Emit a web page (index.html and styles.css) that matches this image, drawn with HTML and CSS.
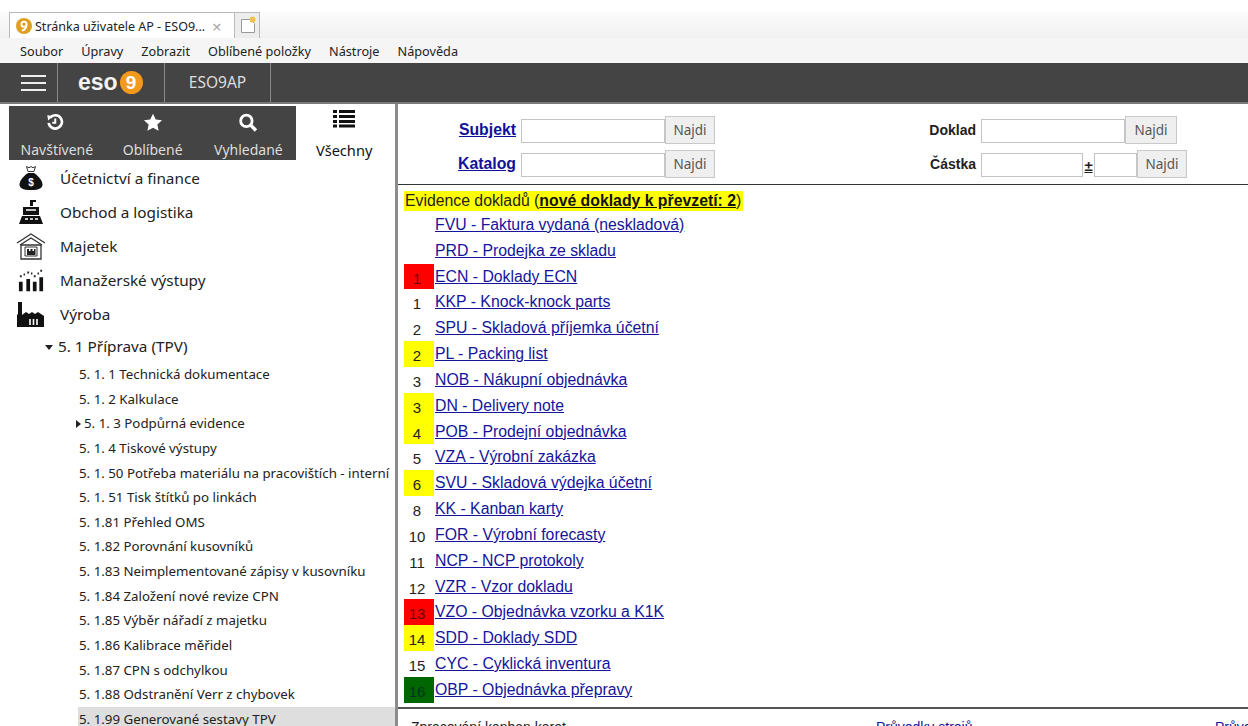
FILE: index.html
```html
<!DOCTYPE html>
<html lang="cs">
<head>
<meta charset="utf-8">
<title>Stránka uživatele AP - ESO9</title>
<link rel="stylesheet" href="styles.css">
</head>
<body>
<div class="tabstrip">
  <div class="tab">
    <svg class="favicon" viewBox="0 0 16 16"><circle cx="8" cy="8" r="8" fill="#dfa021"/><circle cx="8" cy="6.3" r="2.6" fill="none" stroke="#fff" stroke-width="1.8"/><path d="M10.5 6.5C10.5 10 9 12 6 12.5" fill="none" stroke="#fff" stroke-width="1.8"/></svg>
    <span class="tab-title">Stránka uživatele AP - ESO9...</span>
    <span class="tab-close">×</span>
  </div>
  <div class="tab-new">
    <svg viewBox="0 0 16 18" width="16" height="18"><path d="M1.5 3.5h9l4 4v9h-13z" fill="#fff" stroke="#9a9a9a"/><circle cx="12.5" cy="3.5" r="3" fill="#f2c14b"/></svg>
  </div>
</div>
<nav class="menubar">
  <span>Soubor</span><span>Úpravy</span><span>Zobrazit</span><span>Oblíbené položky</span><span>Nástroje</span><span>Nápověda</span>
</nav>
<header class="appbar">
  <div class="burger"><i></i><i></i><i></i></div>
  <div class="brand">eso<span class="brand-nine">9</span></div>
  <div class="user">ESO9AP</div>
</header>
<div class="workspace">
  <aside class="sidebar">
    <div class="side-tabs">
      <div class="side-tab">
        <svg viewBox="0 0 20 20" width="18" height="18" class="history-icon"><path d="M4.6 5.2A7.4 7.4 0 1 1 3 11" fill="none" stroke="#fff" stroke-width="3"/><path d="M1.4 2.6l6.6.6-5.6 5z" fill="#fff"/><path d="M10.3 6v4.8H7" fill="none" stroke="#fff" stroke-width="2.2"/></svg>
        <span>Navštívené</span>
      </div>
      <div class="side-tab">
        <svg viewBox="0 0 20 20" width="20" height="19"><path d="M10 .8l2.9 6.1 6.6.8-4.9 4.5 1.3 6.6L10 15.5l-5.9 3.3 1.3-6.6L.5 7.7l6.6-.8z" fill="#fff"/></svg>
        <span>Oblíbené</span>
      </div>
      <div class="side-tab">
        <svg viewBox="0 0 20 20" width="20" height="19"><circle cx="8.3" cy="8.3" r="6" fill="none" stroke="#fff" stroke-width="3"/><path d="M12.8 12.8l5.6 5.6" stroke="#fff" stroke-width="3.6" fill="none"/></svg>
        <span>Vyhledané</span>
      </div>
      <div class="side-tab side-tab-active">
        <svg viewBox="0 0 22 18" width="22" height="18"><path d="M0 1.5h4M6 1.5h16M0 6.5h4M6 6.5h16M0 11.5h4M6 11.5h16M0 16h4M6 16h16" stroke="#111" stroke-width="3.2" fill="none"/></svg>
        <span>Všechny</span>
      </div>
    </div>
    <ul class="modules">
      <li>
        <svg viewBox="0 0 26 26"><path d="M8.500 1.500l2.500 1.300 2-1.300 2 1.300 2.500-1.300-1.500 5h-6z" fill="none" stroke="#333" stroke-width="1"/><path d="M10 8h6c5 3.500 8.500 8 8.500 11.500 0 3.500-3 5.500-11.500 5.500S1.500 23 1.500 19.500C1.500 16 5 11.500 10 8z" fill="#111"/><text x="13" y="21" class="dollar">$</text></svg>
        <span>Účetnictví a finance</span>
      </li>
      <li>
        <svg viewBox="0 0 26 26"><path d="M12 1h6v2h-3v4h-3zM5 8h16v8H5z" fill="#111"/><path d="M4 17h18l3 8H1z" fill="#111"/><path d="M7 20h3M12 20h3M17 20h3M8 11h10" stroke="#fff" stroke-width="1.500"/></svg>
        <span>Obchod a logistika</span>
      </li>
      <li>
        <svg viewBox="0 0 30 28" class="wide-icon"><path d="M1 11L15 2l14 9" fill="none" stroke="#333" stroke-width="1.300"/><path d="M4 13L15 6l11 7" fill="none" stroke="#333" stroke-width="1.300"/><path d="M5 13h20v14H5z" fill="none" stroke="#333" stroke-width="1.300"/><path d="M9 15h12v9H9z" fill="none" stroke="#333" stroke-width="1"/><path d="M11 17h2v2h1.500v-2h2v2H18v-2h1.500v6H11z" fill="#222"/></svg>
        <span>Majetek</span>
      </li>
      <li>
        <svg viewBox="0 0 28 26"><path d="M1 15h4v10H1zM9 12h4v13H9zM16 15h4v10h-4zM23 10h4v15h-4z" fill="#111"/><path d="M2 9h2M10 5h2M17 9h2M24 3h2M6 7h1.500M14 6h1.500M21 6h1.500" stroke="#222" stroke-width="2.200"/></svg>
        <span>Manažerské výstupy</span>
      </li>
      <li>
        <svg viewBox="0 0 30 26" class="wide-icon"><path d="M2 1h4v13l4-3 3 2 3-2 3 2 3-2 3 2 3 2v11H1V14l1-1z" fill="#111"/><path d="M14 18v6M17.500 18v6M21 18v6" stroke="#fff" stroke-width="1.600"/></svg>
        <span>Výroba</span>
      </li>
    </ul>
    <div class="group"><span class="caret-down"></span>5. 1 Příprava (TPV)</div>
    <ul class="leaves">
      <li>5. 1. 1 Technická dokumentace</li>
      <li>5. 1. 2 Kalkulace</li>
      <li class="branch"><span class="caret-right"></span>5. 1. 3 Podpůrná evidence</li>
      <li>5. 1. 4 Tiskové výstupy</li>
      <li>5. 1. 50 Potřeba materiálu na pracovištích - interní</li>
      <li>5. 1. 51 Tisk štítků po linkách</li>
      <li>5. 1.81 Přehled OMS</li>
      <li>5. 1.82 Porovnání kusovníků</li>
      <li>5. 1.83 Neimplementované zápisy v kusovníku</li>
      <li>5. 1.84 Založení nové revize CPN</li>
      <li>5. 1.85 Výběr nářadí z majetku</li>
      <li>5. 1.86 Kalibrace měřidel</li>
      <li>5. 1.87 CPN s odchylkou</li>
      <li>5. 1.88 Odstranění Verr z chybovek</li>
      <li class="selected">5. 1.99 Generované sestavy TPV</li>
    </ul>
  </aside>
  <main class="content">
    <form class="search">
      <div class="search-col">
        <div class="search-row">
          <a class="search-label search-link" href="#">Subjekt</a>
          <input class="field" type="text">
          <button class="find" type="button">Najdi</button>
        </div>
        <div class="search-row">
          <a class="search-label search-link" href="#">Katalog</a>
          <input class="field" type="text">
          <button class="find" type="button">Najdi</button>
        </div>
      </div>
      <div class="search-col search-col-right">
        <div class="search-row">
          <span class="search-label">Doklad</span>
          <input class="field" type="text">
          <button class="find find-wide" type="button">Najdi</button>
        </div>
        <div class="search-row">
          <span class="search-label">Částka</span>
          <input class="field field-amount" type="text">
          <span class="plusminus">±</span>
          <input class="field field-tol" type="text">
          <button class="find" type="button">Najdi</button>
        </div>
      </div>
    </form>
    <section class="records">
      <div class="records-title">Evidence dokladů (<a href="#">nové doklady k převzetí: 2</a>)</div>
      <table class="records-table">
        <tr><td></td><td><a href="#">FVU - Faktura vydaná (neskladová)</a></td></tr>
        <tr><td></td><td><a href="#">PRD - Prodejka ze skladu</a></td></tr>
        <tr><td class="red">1</td><td><a href="#">ECN - Doklady ECN</a></td></tr>
        <tr><td>1</td><td><a href="#">KKP - Knock-knock parts</a></td></tr>
        <tr><td>2</td><td><a href="#">SPU - Skladová příjemka účetní</a></td></tr>
        <tr><td class="yellow">2</td><td><a href="#">PL - Packing list</a></td></tr>
        <tr><td>3</td><td><a href="#">NOB - Nákupní objednávka</a></td></tr>
        <tr><td class="yellow">3</td><td><a href="#">DN - Delivery note</a></td></tr>
        <tr><td class="yellow">4</td><td><a href="#">POB - Prodejní objednávka</a></td></tr>
        <tr><td>5</td><td><a href="#">VZA - Výrobní zakázka</a></td></tr>
        <tr><td class="yellow">6</td><td><a href="#">SVU - Skladová výdejka účetní</a></td></tr>
        <tr><td>8</td><td><a href="#">KK - Kanban karty</a></td></tr>
        <tr><td>10</td><td><a href="#">FOR - Výrobní forecasty</a></td></tr>
        <tr><td>11</td><td><a href="#">NCP - NCP protokoly</a></td></tr>
        <tr><td>12</td><td><a href="#">VZR - Vzor dokladu</a></td></tr>
        <tr><td class="red">13</td><td><a href="#">VZO - Objednávka vzorku a K1K</a></td></tr>
        <tr><td class="yellow">14</td><td><a href="#">SDD - Doklady SDD</a></td></tr>
        <tr><td>15</td><td><a href="#">CYC - Cyklická inventura</a></td></tr>
        <tr><td class="green">16</td><td><a href="#">OBP - Objednávka přepravy</a></td></tr>
      </table>
    </section>
    <section class="reports">
      <span class="report-a">Zpracování kanban karet</span>
      <a class="report-b" href="#">Průvodky strojů</a>
      <a class="report-c" href="#">Průvodky</a>
    </section>
  </main>
</div>
</body>
</html>
```
FILE: styles.css
```css
* { box-sizing: border-box; }

html, body {
  margin: 0;
  height: 726px;
  overflow: hidden;
  background: #fff;
}

body {
  display: flex;
  flex-direction: column;
  font-family: "Noto Sans", sans-serif;
  color: #222;
}

/* Browser chrome */
.tabstrip {
  height: 26px;
  margin-top: 12px;
  padding-left: 9px;
  display: flex;
  flex: none;
  background: linear-gradient(#fbfbfb, #f1f1f1);
}

.tab {
  width: 226px;
  background: #fff;
  border: 1px solid #b9b9b9;
  border-bottom: 0;
  display: flex;
  align-items: center;
  padding: 1px 0 0 6px;
  font-size: 12.500px;
}

.favicon { width: 16px; height: 16px; flex: none; }
.tab-title { margin-left: 3px; white-space: nowrap; }
.tab-close { margin-left: 7px; font-size: 17px; color: #aaa; line-height: 1; }

.tab-new {
  width: 25px;
  background: #ededed;
  border: 1px solid #b9b9b9;
  border-left: 0;
  border-bottom: 0;
  padding: 3px 0 0 5px;
}

.menubar {
  height: 25px;
  flex: none;
  background: #f5f5f5;
  display: flex;
  align-items: center;
  padding-left: 20px;
  gap: 18px;
  font-size: 12.700px;
}

.appbar {
  height: 41px;
  flex: none;
  background: #444;
  border-bottom: 2px solid #7a7a7a;
  display: flex;
  color: #ddd;
}

.burger {
  width: 58px;
  padding: 12px 0 0 21px;
  border-right: 1px solid #8a8a8a;
}

.burger i {
  display: block;
  width: 25px;
  height: 2px;
  background: #eee;
  margin-bottom: 5px;
}

.brand {
  width: 107px;
  border-right: 1px solid #8a8a8a;
  font: 700 23px/37px "Liberation Sans", sans-serif;
  color: #f4f4f4;
  padding-left: 20px;
  display: flex;
  align-items: center;
}

.brand-nine {
  width: 23px;
  height: 23px;
  margin-left: 2px;
  border-radius: 50%;
  background: #f39a1e;
  color: #fff;
  font-size: 19px;
  line-height: 23px;
  text-align: center;
}

.user {
  width: 106px;
  border-right: 1px solid #8a8a8a;
  text-align: center;
  font-size: 15.500px;
  line-height: 38px;
}

/* Page body */
.workspace {
  flex: 1;
  min-height: 0;
  display: flex;
  overflow: hidden;
}

.sidebar {
  width: 398px;
  flex: none;
  padding: 2px 0 0 9px;
  border-right: 3px solid #8c8c8c;
  overflow: hidden;
}

.side-tabs {
  display: flex;
  width: 383px;
  height: 54px;
}

.side-tab {
  width: 96px;
  height: 54px;
  background: #444;
  color: #ddd;
  font-size: 14px;
  display: flex;
  flex-direction: column;
  align-items: center;
  justify-content: space-between;
  padding: 7px 0 0;
  white-space: nowrap;
}

.side-tab span { line-height: 20px; }
.history-icon { margin-right: 3px; }

.side-tab-active {
  background: #fff;
  color: #111;
  padding: 4px 0 0;
  font-size: 14.600px;
}

.modules {
  list-style: none;
  margin: 1px 0 0;
  padding: 0;
}

.modules li {
  height: 34px;
  display: flex;
  align-items: center;
  font-size: 15.300px;
  padding-left: 9px;
}

.modules svg { width: 26px; height: 26px; flex: none; }
.modules .wide-icon { width: 30px; height: 28px; margin-left: -2px; margin-right: -2px; }
.modules span { margin-left: 16px; }
.dollar { font: 700 10px "Liberation Sans", sans-serif; fill: #fff; text-anchor: middle; }

.group {
  height: 31px;
  padding: 5px 0 0 36px;
  font-size: 15.300px;
  line-height: 20px;
}

.caret-down {
  display: inline-block;
  border-left: 4px solid transparent;
  border-right: 4px solid transparent;
  border-top: 5px solid #222;
  margin-right: 5px;
  vertical-align: 2px;
}

.caret-right {
  display: inline-block;
  border-top: 4px solid transparent;
  border-bottom: 4px solid transparent;
  border-left: 5px solid #222;
  margin-right: 3px;
}

.leaves {
  list-style: none;
  margin: 0;
  padding: 0 0 0 69px;
  font-size: 13.300px;
}

.leaves li {
  height: 24.650px;
  line-height: 24.650px;
  padding-left: 1px;
  white-space: nowrap;
}

.leaves .branch { padding-left: 0; margin-left: -2px; }
.leaves .selected { background: #dedede; }

/* Search form and record list */
.content {
  flex: 1;
  min-width: 0;
  font-family: "Liberation Sans", sans-serif;
  font-size: 14px;
  overflow: hidden;
}

.search {
  height: 81px;
  display: flex;
  padding-top: 9px;
  border-bottom: 1px solid #333;
}

.search-col {
  width: 530px;
  flex: none;
}

.search-col-right { width: 300px; }

.search-row {
  height: 34px;
  display: flex;
  align-items: center;
}

.search-label {
  width: 118px;
  text-align: right;
  font-weight: 700;
  font-size: 14px;
  color: #222;
  margin-right: 5px;
}

.search-link { color: #10109a; font-size: 15.800px; }
.search-col-right .search-label { width: 48px; }

.field {
  width: 144px;
  height: 24px;
  margin-top: 1px;
  border: 1px solid #c4c4c4;
  background: #fff;
  padding: 0;
}

.field-amount { width: 102px; }
.field-tol { width: 43px; }

.plusminus {
  width: 11px;
  margin-top: 3px;
  font-weight: 700;
  font-size: 15px;
  text-decoration: underline;
  text-align: center;
  color: #222;
}

.find {
  width: 50px;
  height: 28px;
  padding: 0;
  border: 1px solid #c8c8c8;
  background: #efefef;
  color: #555;
  font: 13.500px "Noto Sans", sans-serif;
  margin-top: -1px;
}

.find-wide { width: 52px; }

.records {
  height: 524px;
  padding: 6px 0 0 6px;
  border-bottom: 2px solid #555;
}

.records-title {
  display: inline-block;
  background: #ff0;
  height: 20px;
  line-height: 20px;
  padding: 0 2px 0 1px;
  color: #222;
  font-size: 15.800px;
}

.records-title a { color: #111; font-weight: 700; }

.records-table {
  border-collapse: collapse;
  margin-top: 1px;
  font-size: 15.800px;
}

.records-table tr { height: 25.830px; }

.records-table td {
  padding: 0;
  white-space: nowrap;
}

.records-table td:first-child {
  width: 30px;
  text-align: center;
  font-size: 15px;
  color: #222;
  padding-top: 3px;
  padding-right: 4px;
}

.records-table a { color: #14149c; padding-left: 1px; }

.red { background: #f00; color: #600 !important; }
.yellow { background: #ff0; }
.green { background: #060; color: #032 !important; }

.reports {
  position: relative;
  font-size: 14px;
  height: 24px;
}

.report-a, .report-b, .report-c {
  position: absolute;
  top: 10px;
  white-space: nowrap;
}

.report-a { left: 13px; }
.report-b { left: 478px; color: #14149c; }
.report-c { left: 817px; color: #14149c; }
```
